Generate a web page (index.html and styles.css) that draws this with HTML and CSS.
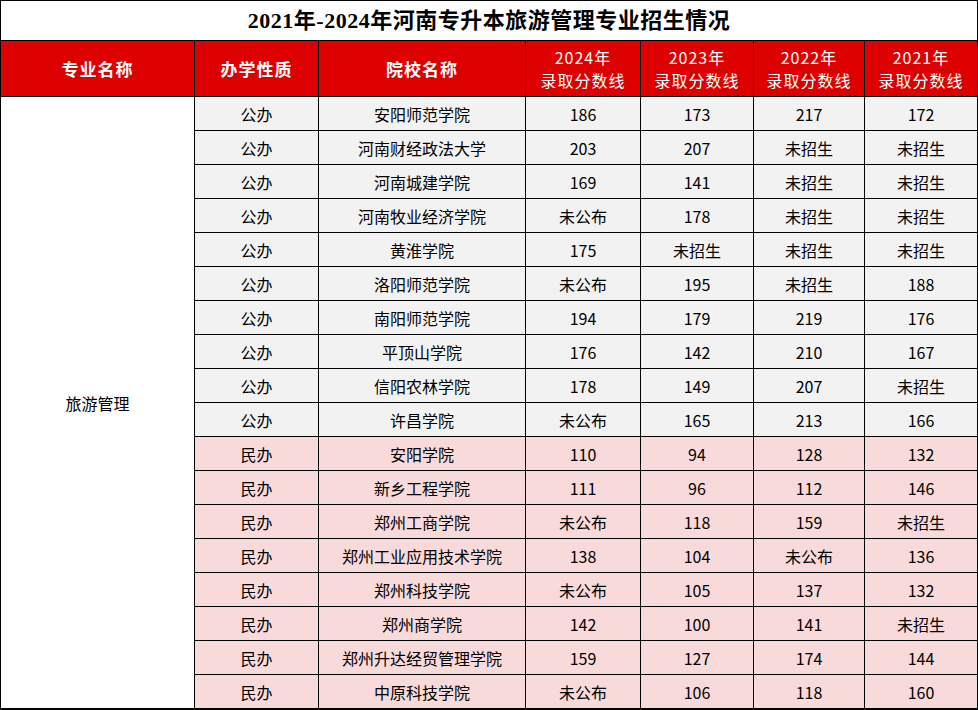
FILE: index.html
```html
<!DOCTYPE html>
<html lang="zh">
<head>
<meta charset="utf-8">
<title>2021年-2024年河南专升本旅游管理专业招生情况</title>
<link rel="stylesheet" href="styles.css">
</head>
<body>
<table class="sheet">
  <colgroup>
    <col class="c1"><col class="c2"><col class="c3"><col class="c4"><col class="c5"><col class="c6"><col class="c7">
  </colgroup>
  <tr class="title-row"><td colspan="7" class="title">2021年-2024年河南专升本旅游管理专业招生情况</td></tr>
  <tr class="head-row">
    <th>专业名称</th><th>办学性质</th><th>院校名称</th>
    <th class="yr"><span class="ln">2024年</span><span class="ln">录取分数线</span></th>
    <th class="yr"><span class="ln">2023年</span><span class="ln">录取分数线</span></th>
    <th class="yr"><span class="ln">2022年</span><span class="ln">录取分数线</span></th>
    <th class="yr"><span class="ln">2021年</span><span class="ln">录取分数线</span></th>
  </tr>
  <tr class="pub"><td rowspan="18" class="major">旅游管理</td><td>公办</td><td>安阳师范学院</td><td>186</td><td>173</td><td>217</td><td>172</td></tr>
  <tr class="pub"><td>公办</td><td>河南财经政法大学</td><td>203</td><td>207</td><td>未招生</td><td>未招生</td></tr>
  <tr class="pub"><td>公办</td><td>河南城建学院</td><td>169</td><td>141</td><td>未招生</td><td>未招生</td></tr>
  <tr class="pub"><td>公办</td><td>河南牧业经济学院</td><td>未公布</td><td>178</td><td>未招生</td><td>未招生</td></tr>
  <tr class="pub"><td>公办</td><td>黄淮学院</td><td>175</td><td>未招生</td><td>未招生</td><td>未招生</td></tr>
  <tr class="pub"><td>公办</td><td>洛阳师范学院</td><td>未公布</td><td>195</td><td>未招生</td><td>188</td></tr>
  <tr class="pub"><td>公办</td><td>南阳师范学院</td><td>194</td><td>179</td><td>219</td><td>176</td></tr>
  <tr class="pub"><td>公办</td><td>平顶山学院</td><td>176</td><td>142</td><td>210</td><td>167</td></tr>
  <tr class="pub"><td>公办</td><td>信阳农林学院</td><td>178</td><td>149</td><td>207</td><td>未招生</td></tr>
  <tr class="pub"><td>公办</td><td>许昌学院</td><td>未公布</td><td>165</td><td>213</td><td>166</td></tr>
  <tr class="pri"><td>民办</td><td>安阳学院</td><td>110</td><td>94</td><td>128</td><td>132</td></tr>
  <tr class="pri"><td>民办</td><td>新乡工程学院</td><td>111</td><td>96</td><td>112</td><td>146</td></tr>
  <tr class="pri"><td>民办</td><td>郑州工商学院</td><td>未公布</td><td>118</td><td>159</td><td>未招生</td></tr>
  <tr class="pri"><td>民办</td><td>郑州工业应用技术学院</td><td>138</td><td>104</td><td>未公布</td><td>136</td></tr>
  <tr class="pri"><td>民办</td><td>郑州科技学院</td><td>未公布</td><td>105</td><td>137</td><td>132</td></tr>
  <tr class="pri"><td>民办</td><td>郑州商学院</td><td>142</td><td>100</td><td>141</td><td>未招生</td></tr>
  <tr class="pri"><td>民办</td><td>郑州升达经贸管理学院</td><td>159</td><td>127</td><td>174</td><td>144</td></tr>
  <tr class="pri"><td>民办</td><td>中原科技学院</td><td>未公布</td><td>106</td><td>118</td><td>160</td></tr>
</table>
</body>
</html>
```
FILE: styles.css
```css
html, body {
  margin: 0;
  padding: 0;
  background: #ffffff;
}
body {
  font-family: "Noto Sans CJK SC", "Noto Sans", sans-serif;
  color: #000;
}
.sheet {
  width: 978px;
  border-collapse: collapse;
  table-layout: fixed;
  border: 1px solid #000;
  border-bottom: 2px solid #000;
}
.c1 { width: 194px; }
.c2 { width: 124px; }
.c3 { width: 207px; }
.c4 { width: 115px; }
.c5 { width: 113px; }
.c6 { width: 111px; }
.c7 { width: 113px; }
.sheet td, .sheet th {
  border: 1px solid #000;
  padding: 0;
  text-align: center;
  vertical-align: middle;
  font-size: 16px;
  font-weight: 400;
  line-height: 20px;
}
.title-row td {
  height: 39px;
  font-family: "Liberation Serif", "Noto Sans CJK SC", serif;
  font-weight: 700;
  font-size: 22px;
  letter-spacing: 0.5px;
  background: #fff;
}
.head-row th {
  height: 55px;
  background: #dd0000;
  color: #fff;
  font-weight: 700;
  font-size: 17px;
  letter-spacing: 1px;
  line-height: 22px;
}
.head-row th.yr {
  font-weight: 400;
  font-size: 16px;
  letter-spacing: 1px;
}
.ln {
  display: block;
  line-height: 23px;
}
.pub td, .pri td {
  height: 33px;
}
.pub td { background: #f2f2f2; }
.pri td { background: #f9dadb; }
.sheet td.major {
  background: #fff;
  font-size: 16px;
}
```
